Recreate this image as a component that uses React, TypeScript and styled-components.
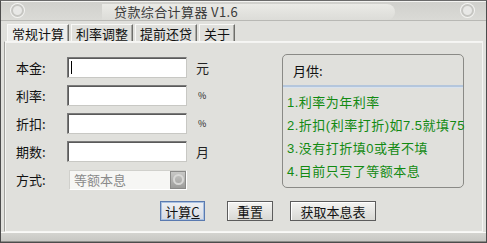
import { createGlobalStyle, styled } from 'styled-components';

const GlobalStyle = createGlobalStyle`
  html, body {
    margin: 0;
    padding: 0;
    background: #e0e0dc;
  }
  * {
    box-sizing: border-box;
  }
`;

const Window = styled.div`
  width: 487px;
  height: 243px;
  display: flex;
  flex-direction: column;
  background: #e0e0dc;
  border: 1px solid #4c4c4c;
  border-top-color: #6a6a6a;
  font-family: 'Noto Sans CJK SC', 'Noto Sans', sans-serif;
  font-size: 12px;
  color: #111;
  overflow: hidden;
`;

const TitleBar = styled.div`
  height: 20px;
  flex: none;
  display: flex;
  align-items: center;
  padding: 0 12px 0 10px;
  background: linear-gradient(#d0d0cc, #dadad6);
  border-bottom: 1px solid #b8b8b4;
  box-shadow: inset 0 1px 0 #f4f4f2;
`;

const Knob = styled.div`
  width: 13px;
  height: 13px;
  flex: none;
  border-radius: 50%;
  border: 2px solid #c6c6c2;
  background: #e8e8e6;
  box-shadow: 0 0 0 1px #f4f4f2;
`;

const TitleLine = styled.div`
  flex: 1;
  height: 100%;
  display: flex;
  align-items: center;
  padding-left: 78px;
  padding-right: 66px;
`;

const TitlePill = styled.div`
  flex: 1;
  height: 16px;
  margin-top: 2px;
  display: flex;
  align-items: center;
  padding-left: 12px;
  border-radius: 0 10px 10px 0;
  background: linear-gradient(#eaeae6, #dcdcd8);
  font-size: 13px;
  color: #3a3a3a;
  letter-spacing: 0.4px;
`;

const TabBar = styled.div`
  height: 20px;
  flex: none;
  display: flex;
  align-items: flex-end;
  gap: 2px;
  padding-left: 6px;
`;

const Tab = styled.div<{ $active?: boolean }>`
  height: 17px;
  padding: 0 4px;
  display: flex;
  align-items: center;
  font-size: 13px;
  line-height: 1;
  color: #111;
  background: ${(p) => (p.$active ? '#ededeb' : '#e0e0dc')};
  border: 1px solid #f8f8f6;
  border-right-color: #6e6e6a;
  border-bottom: none;
  box-shadow: inset -1px 0 0 #a8a8a4;
`;

const Panel = styled.div`
  flex: 1;
  margin: 0 3px 0 3px;
  border: 1px solid #f6f6f4;
  border-left-color: #a0a09c;
  box-shadow: inset 1px 1px 0 #f4f4f2;
  display: flex;
  flex-direction: column;
  padding: 10px 0 0 0;
`;

const Body = styled.div`
  display: flex;
  align-items: flex-start;
`;

const Form = styled.div`
  display: flex;
  flex-direction: column;
  gap: 7px;
  padding: 5px 0 0 11px;
  width: 277px;
`;

const Row = styled.div`
  height: 21px;
  display: flex;
  align-items: center;
`;

const Label = styled.div`
  width: 51px;
  font-size: 13px;
  color: #111;
`;

const Input = styled.div<{ $caret?: boolean }>`
  width: 120px;
  height: 21px;
  background: #fff;
  border: 1px solid #7a7a7a;
  border-right-color: #c8c8c4;
  border-bottom-color: #c8c8c4;
  box-shadow: inset 1px 1px 0 #5a5a5a;
  position: relative;
  &::after {
    content: '';
    display: ${(p) => (p.$caret ? 'block' : 'none')};
    position: absolute;
    left: 3px;
    top: 3px;
    width: 1px;
    height: 13px;
    background: #000;
  }
`;

const Unit = styled.div<{ $small?: boolean }>`
  margin-left: ${(p) => (p.$small ? '11px' : '9px')};
  font-size: ${(p) => (p.$small ? '9px' : '13px')};
  color: #222;
`;

const Combo = styled.div`
  margin-left: 2px;
  width: 118px;
  height: 20px;
  display: flex;
  align-items: center;
  background: #f6f6f4;
  border: 1px solid #d0d0cc;
  border-right-color: #fff;
  border-bottom-color: #fff;
  padding-left: 4px;
  font-size: 13px;
  color: #8a8a8a;
`;

const ComboText = styled.div`
  flex: 1;
`;

const ComboButton = styled.div`
  width: 16px;
  height: 18px;
  display: flex;
  align-items: center;
  justify-content: center;
  background: linear-gradient(#c8c8c6, #9c9c9a);
  border: 1px solid #8a8a88;
`;

const ComboRing = styled.div`
  width: 11px;
  height: 11px;
  border-radius: 50%;
  border: 2px solid #d8d8d6;
`;

const GroupBox = styled.div`
  margin-top: 2px;
  width: 182px;
  height: 134px;
  border: 1px solid #8a8a86;
  border-radius: 5px;
  display: flex;
  flex-direction: column;
`;

const GroupHead = styled.div`
  height: 32px;
  display: flex;
  align-items: center;
  padding-left: 10px;
  font-size: 13px;
  border-bottom: 2px solid #b4c6dc;
  box-shadow: 0 1px 0 #d8e2ee;
`;

const Notes = styled.div`
  display: flex;
  flex-direction: column;
  gap: 5px;
  padding: 5px 0 0 4px;
`;

const Note = styled.div`
  height: 18px;
  display: flex;
  align-items: center;
  font-family: 'Liberation Sans', 'Noto Sans CJK SC', sans-serif;
  font-size: 13px;
  letter-spacing: 0.5px;
  color: #128a12;
  white-space: nowrap;
`;

const Buttons = styled.div`
  display: flex;
  padding: 11px 0 0 155px;
`;

const Button = styled.div<{ $w: number; $gap?: number; $focus?: boolean }>`
  width: ${(p) => p.$w}px;
  height: 20px;
  margin-left: ${(p) => p.$gap ?? 0}px;
  display: flex;
  align-items: center;
  justify-content: center;
  font-size: 13px;
  color: #111;
  background: ${(p) => (p.$focus ? 'linear-gradient(#eef0f4, #d6dae2)' : 'linear-gradient(#f4f4f2, #d8d8d4)')};
  border: 1px solid ${(p) => (p.$focus ? '#5a7ab0' : '#5c5c5c')};
  box-shadow: ${(p) => (p.$focus ? 'inset 0 0 0 1px #a8c0e0' : 'inset 1px 1px 0 #fff')};
`;

const Underline = styled.span`
  text-decoration: underline;
`;

const Footer = styled.div`
  height: 10px;
  flex: none;
  border-top: 1px solid #fafaf8;
  background: linear-gradient(#d4d4d0, #c8c8c4);
  border-bottom: 1px solid #8c8c88;
`;

const notes = [
  '1.利率为年利率',
  '2.折扣(利率打折)如7.5就填75',
  '3.没有打折填0或者不填',
  '4.目前只写了等额本息',
];

export default function App() {
  return (
    <>
      <GlobalStyle />
      <Window>
        <TitleBar>
          <Knob />
          <TitleLine>
            <TitlePill>贷款综合计算器 V1.6</TitlePill>
          </TitleLine>
          <Knob />
        </TitleBar>
        <TabBar>
          <Tab $active>常规计算</Tab>
          <Tab>利率调整</Tab>
          <Tab>提前还贷</Tab>
          <Tab>关于</Tab>
        </TabBar>
        <Panel>
          <Body>
            <Form>
              <Row>
                <Label>本金:</Label>
                <Input $caret />
                <Unit>元</Unit>
              </Row>
              <Row>
                <Label>利率:</Label>
                <Input />
                <Unit $small>%</Unit>
              </Row>
              <Row>
                <Label>折扣:</Label>
                <Input />
                <Unit $small>%</Unit>
              </Row>
              <Row>
                <Label>期数:</Label>
                <Input />
                <Unit>月</Unit>
              </Row>
              <Row>
                <Label>方式:</Label>
                <Combo>
                  <ComboText>等额本息</ComboText>
                  <ComboButton>
                    <ComboRing />
                  </ComboButton>
                </Combo>
              </Row>
            </Form>
            <GroupBox>
              <GroupHead>月供:</GroupHead>
              <Notes>
                {notes.map((n) => (
                  <Note key={n}>{n}</Note>
                ))}
              </Notes>
            </GroupBox>
          </Body>
          <Buttons>
            <Button $w={45} $focus>
              计算<Underline>C</Underline>
            </Button>
            <Button $w={46} $gap={22}>重置</Button>
            <Button $w={86} $gap={17}>获取本息表</Button>
          </Buttons>
        </Panel>
        <Footer />
      </Window>
    </>
  );
}
